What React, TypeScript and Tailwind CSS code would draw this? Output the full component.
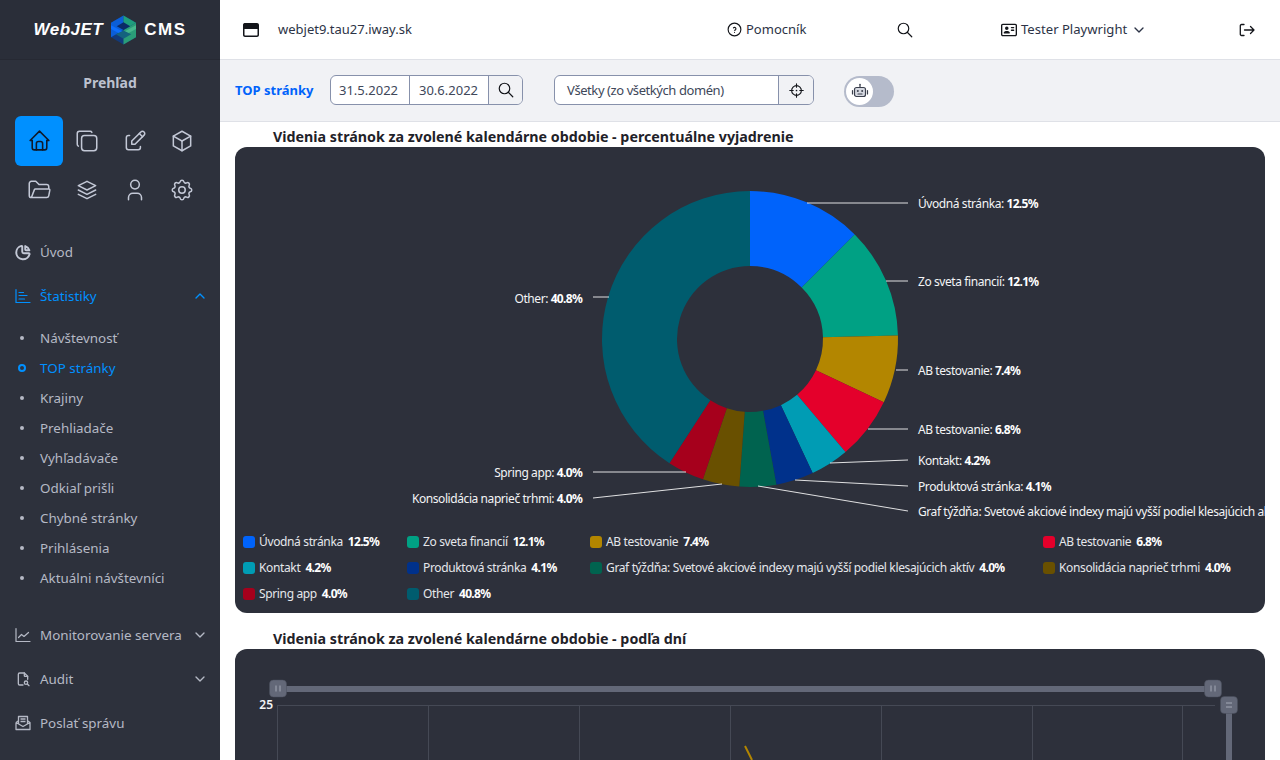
import {
    TbBox,
    TbChartPie,
    TbChevronDown,
    TbChevronUp,
    TbCopy,
    TbEdit,
    TbFileSearch,
    TbFolderOpen,
    TbHelpCircle,
    TbHome,
    TbSearch,
    TbSettings,
    TbStack2,
    TbUser,
} from "react-icons/tb";
import { FaRegAddressCard, FaRegWindowMaximize } from "react-icons/fa6";

const subItems = ["Návštevnosť", "TOP stránky", "Krajiny", "Prehliadače", "Vyhľadávače", "Odkiaľ prišli", "Chybné stránky", "Prihlásenia", "Aktuálni návštevníci"];

const slices = [
    { name: "Úvodná stránka", value: 12.5, color: "#0063fb" },
    { name: "Zo sveta financií", value: 12.1, color: "#00a184" },
    { name: "AB testovanie", value: 7.4, color: "#b38600" },
    { name: "AB testovanie", value: 6.8, color: "#e4002b" },
    { name: "Kontakt", value: 4.2, color: "#009cb4" },
    { name: "Produktová stránka", value: 4.1, color: "#00318b" },
    { name: "Graf týždňa: Svetové akciové indexy majú vyšší podiel klesajúcich aktív", value: 4.0, color: "#00634f" },
    { name: "Konsolidácia naprieč trhmi", value: 4.0, color: "#695000" },
    { name: "Spring app", value: 4.0, color: "#a6001c" },
    { name: "Other", value: 40.8, color: "#005c6e" },
];

const leaders = [
    { i: 0, from: [807, 203], to: [908, 203], x: 918, y: 203 },
    { i: 1, from: [886, 281], to: [908, 281], x: 918, y: 281 },
    { i: 2, from: [896, 370], to: [908, 370], x: 918, y: 370 },
    { i: 3, from: [868, 429], to: [908, 429], x: 918, y: 429 },
    { i: 4, from: [830, 463], to: [908, 460], x: 918, y: 460 },
    { i: 5, from: [795, 480], to: [908, 486], x: 918, y: 486 },
    { i: 6, from: [758, 486], to: [908, 511], x: 918, y: 511 },
    { i: 7, from: [722, 484], to: [593, 498], x: 582, y: 498 },
    { i: 8, from: [686, 472], to: [593, 472], x: 582, y: 472 },
    { i: 9, from: [609, 297], to: [593, 297], x: 582, y: 298 },
];

function slicePath(start: number, end: number) {
    const cx = 750, cy = 339, R = 148, r = 73;
    const p = (a: number, rad: number) => `${cx + rad * Math.sin(a)} ${cy - rad * Math.cos(a)}`;
    const large = end - start > Math.PI ? 1 : 0;
    return `M${p(start, R)} A${R} ${R} 0 ${large} 1 ${p(end, R)} L${p(end, r)} A${r} ${r} 0 ${large} 0 ${p(start, r)} Z`;
}

function PieChart() {
    const total = slices.reduce((s, x) => s + x.value, 0);
    let acc = 0;
    return (
        <svg viewBox="235 147 1030 380" className="block w-[1030px] h-[380px]">
            {slices.map((s, i) => {
                const start = (acc / total) * Math.PI * 2;
                acc += s.value;
                return <path key={i} d={slicePath(start, (acc / total) * Math.PI * 2)} fill={s.color} />;
            })}
            {leaders.map((l) => (
                <g key={l.i}>
                    <line x1={l.from[0]} y1={l.from[1]} x2={l.to[0]} y2={l.to[1]} stroke="#ffffff" strokeOpacity={0.85} strokeWidth={1} />
                    <text x={l.x} y={l.y + 5} fontSize={12} fill="#f3f4f6" letterSpacing={-0.42} textAnchor={l.x < 700 ? "end" : "start"}>
                        {slices[l.i].name}: <tspan fontWeight={700} fill="#ffffff" letterSpacing={-0.7}>{slices[l.i].value.toFixed(1)}%</tspan>
                    </text>
                </g>
            ))}
        </svg>
    );
}

function Handle() {
    return <rect width={17} height={17} x={-8.5} y={-8.5} rx={4} fill="#636878" stroke="#4a4e5c" strokeWidth={0.5} />;
}

function DailyChart() {
    const grid = [277, 428, 579, 730, 881, 1032, 1182];
    return (
        <svg viewBox="235 649 1030 111" className="block w-[1030px] h-[111px]">
            <rect x={285} y={686} width={922} height={6} fill="#636878" />
            <rect x={1226} y={712} width={6} height={48} fill="#636878" />
            <line x1={277} y1={705.5} x2={1215} y2={705.5} stroke="#454955" />
            {grid.map((x) => (
                <line key={x} x1={x + 0.5} y1={705} x2={x + 0.5} y2={760} stroke="#454955" />
            ))}
            <text x={273} y={709} fontSize={12} fontWeight={600} fill="#f3f4f6" textAnchor="end">25</text>
            <line x1={745} y1={746} x2={752} y2={760} stroke="#b38600" strokeWidth={2} />
            <g transform="translate(278 688.5)">
                <Handle />
                <path d="M-2 -3V3M2 -3V3" stroke="#a5a9b6" />
            </g>
            <g transform="translate(1213 688.5)">
                <Handle />
                <path d="M-2 -3V3M2 -3V3" stroke="#a5a9b6" />
            </g>
            <g transform="translate(1229 705)">
                <Handle />
                <path d="M-3 -2H3M-3 2H3" stroke="#a5a9b6" />
            </g>
        </svg>
    );
}

function Logo() {
    return (
        <div className="h-[60px] shrink-0 flex items-center justify-center border-b border-[#262933] bg-[#2a2e39]">
            <span className="text-white text-[17px] font-black italic tracking-[0.5px] leading-none font-['Liberation_Sans',sans-serif]">WebJET</span>
            <svg viewBox="0 0 26 30" className="w-[25px] h-[30px] mx-[8px]">
                <polygon points="13,0 26,7.5 26,22.5 13,30 0,22.5 0,7.5" fill="#123a7a" />
                <polygon points="0,7.5 13,0 13,15 0,22.5" fill="#0b5ed7" />
                <polygon points="13,0 26,7.5 13,15" fill="#1f9d7c" />
                <polygon points="13,15 26,7.5 26,22.5 13,30" fill="#2a9d78" />
                <polygon points="0,10 13,17 13,21 0,14" fill="#0d6efd" />
                <polygon points="13,17 26,10 26,14 13,21" fill="#47b88d" />
                <polygon points="13,7 20,11 13,15 6,11" fill="#0a2a66" />
                <polygon points="13,24 5,19.5 13,15.5 21,19.5" fill="#14627e" />
            </svg>
            <span className="text-white text-[17px] font-black tracking-[1.5px] leading-none font-['Liberation_Sans',sans-serif]">CMS</span>
        </div>
    );
}

function StatsIcon() {
    return (
        <svg viewBox="0 0 16 16" className="w-[16px] h-[16px] shrink-0" fill="none" stroke="currentColor" strokeWidth={1.2} strokeLinecap="round">
            <path d="M1 1.5V14.5H15" />
            <path d="M4 4.5H8.5M4 7.5H12M4 11H9.5" />
        </svg>
    );
}

function MonitorIcon() {
    return (
        <svg viewBox="0 0 16 16" className="w-[16px] h-[16px] shrink-0" fill="none" stroke="currentColor" strokeWidth={1.2} strokeLinecap="round" strokeLinejoin="round">
            <path d="M1 1.5V14.5H15" />
            <path d="M3.5 10.5L6.5 7.5L9 9.5L13.5 5.5" />
        </svg>
    );
}

function MailIcon() {
    return (
        <svg viewBox="0 0 16 16" className="w-[16px] h-[16px] shrink-0" fill="none" stroke="currentColor" strokeWidth={1.3} strokeLinejoin="round">
            <path d="M1 7.5V14.5H15V7.5L12.5 5.8M1 7.5L3.5 5.8M1 7.5L8 11.5L15 7.5" />
            <path d="M3.5 9V1.5H12.5V9" />
            <path d="M5.5 4H10.5M5.5 6.5H10.5" />
        </svg>
    );
}

function LogoutIcon() {
    return (
        <svg viewBox="0 0 16 16" className="w-[16px] h-[16px] text-[#13151a]" fill="none" stroke="currentColor" strokeWidth={1.3} strokeLinecap="round" strokeLinejoin="round">
            <path d="M5 2.5H2.5A1.2 1.2 0 0 0 1.3 3.7V12.3A1.2 1.2 0 0 0 2.5 13.5H5" />
            <path d="M5.5 8H15M11.5 4.5L15 8L11.5 11.5" />
        </svg>
    );
}

function RobotIcon() {
    return (
        <svg viewBox="0 0 18 18" className="w-[18px] h-[18px] text-[#3a3f4c]" fill="none" stroke="currentColor" strokeWidth={1.2} strokeLinecap="round">
            <rect x={3.5} y={5.5} width={11} height={9} rx={2} fill="#d5d8e0" />
            <path d="M9 5.5V3M1.5 8.5V12M16.5 8.5V12M7 12H11" />
            <circle cx={9} cy={2.6} r={0.8} fill="currentColor" stroke="none" />
            <circle cx={6.8} cy={9} r={1} fill="currentColor" stroke="none" />
            <circle cx={11.2} cy={9} r={1} fill="currentColor" stroke="none" />
        </svg>
    );
}

function CrosshairIcon() {
    return (
        <svg viewBox="0 0 16 16" className="w-[15px] h-[15px] text-[#13151a]" fill="none" stroke="currentColor" strokeWidth={1.2} strokeLinecap="round">
            <circle cx={8} cy={8} r={5.2} />
            <path d="M8 0.8V4.5M8 11.5V15.2M0.8 8H4.5M11.5 8H15.2" />
            <circle cx={8} cy={8} r={0.9} fill="currentColor" stroke="none" />
        </svg>
    );
}

function Sidebar() {
    const iconCls = "w-[26px] h-[26px] text-[#c3c8d6]";
    return (
        <aside className="w-[220px] h-full shrink-0 bg-[#2d313c] flex flex-col overflow-hidden text-[13.4px] text-[#b5b9c5] whitespace-nowrap">
            <Logo />
            <div className="h-[43px] mt-[1px] shrink-0 flex items-center justify-center font-bold text-[14px] text-[#bcc1cf]">Prehľad</div>
            <div className="grid grid-cols-[48px_48px_47px_48px] auto-rows-[49px] shrink-0 px-[15px] mt-[12px] items-center justify-items-center">
                <div className="w-[48px] h-[50px] rounded-[6px] bg-[#0090ff] flex items-center justify-center text-[#0f1a2a]"><TbHome size={25} strokeWidth={1.5} /></div>
                <TbCopy className={iconCls} strokeWidth={1.4} />
                <TbEdit className={iconCls} strokeWidth={1.4} />
                <TbBox className={iconCls} strokeWidth={1.4} />
                <TbFolderOpen className={iconCls} strokeWidth={1.4} />
                <TbStack2 className={iconCls} strokeWidth={1.4} />
                <TbUser className={iconCls} strokeWidth={1.4} />
                <TbSettings className={iconCls} strokeWidth={1.4} />
            </div>
            <nav className="mt-[16px] flex flex-col shrink-0">
                <a className="h-[44px] flex items-center pl-[14px] pr-[12px] gap-[8px]">
                    <span className="w-[18px] flex justify-center text-[#c3c8d6]"><TbChartPie size={19} strokeWidth={2.6} /></span>
                    <span>Úvod</span>
                </a>
                <a className="h-[44px] flex items-center pl-[15px] pr-[12px] gap-[9px] text-[#0090ff]">
                    <StatsIcon />
                    <span className="flex-1">Štatistiky</span>
                    <TbChevronUp size={16} strokeWidth={2} />
                </a>
                <ul className="pt-[5px] flex flex-col">
                    {subItems.map((item) => {
                        const active = item === "TOP stránky";
                        return (
                            <li key={item} className={`h-[30px] flex items-center ${active ? "text-[#0090ff]" : ""}`}>
                                <span className="w-[40px] flex justify-center pl-[4px]">
                                    {active ? (
                                        <span className="w-[8px] h-[8px] rounded-full border-2 border-[#0090ff]" />
                                    ) : (
                                        <span className="w-[4px] h-[4px] rounded-full bg-[#b5b9c5]" />
                                    )}
                                </span>
                                {item}
                            </li>
                        );
                    })}
                </ul>
                <a className="h-[44px] mt-[20px] flex items-center pl-[15px] pr-[12px] gap-[9px]">
                    <MonitorIcon />
                    <span className="flex-1">Monitorovanie servera</span>
                    <TbChevronDown size={16} strokeWidth={2} />
                </a>
                <a className="h-[44px] flex items-center pl-[15px] pr-[12px] gap-[9px]">
                    <TbFileSearch size={16} className="shrink-0" />
                    <span className="flex-1">Audit</span>
                    <TbChevronDown size={16} strokeWidth={2} />
                </a>
                <a className="h-[44px] flex items-center pl-[15px] pr-[12px] gap-[9px]">
                    <MailIcon />
                    <span className="flex-1">Poslať správu</span>
                </a>
            </nav>
        </aside>
    );
}

function TopBar() {
    return (
        <header className="h-[60px] shrink-0 bg-white border-b border-[#dfe1e7] flex items-center text-[13px] text-[#2c3346] whitespace-nowrap">
            <span className="w-[58px] pl-[23px]"><FaRegWindowMaximize size={16} className="text-[#13151a]" /></span>
            <span className="w-[448px]">webjet9.tau27.iway.sk</span>
            <TbHelpCircle size={17} className="mr-[3px] text-[#13151a]" strokeWidth={1.6} />
            <span className="w-[150px]">Pomocník</span>
            <TbSearch size={18} className="text-[#13151a] mr-[87px]" strokeWidth={1.6} />
            <FaRegAddressCard size={16} className="mr-[4px] text-[#13151a]" />
            <span className="text-[13.1px]">Tester Playwright</span>
            <TbChevronDown size={16} className="ml-[4px] mr-[92px]" />
            <LogoutIcon />
        </header>
    );
}

function ToolBar() {
    return (
        <div className="h-[62px] shrink-0 bg-[#f1f2f5] border-b border-[#dfe1e7] flex items-center pb-[1px] pl-[15px] text-[13px] text-[#40485a] whitespace-nowrap">
            <span className="w-[95px] pt-[1px] font-bold text-[13px] text-[#0063fb]">TOP stránky</span>
            <div className="w-[193px] h-[30px] flex rounded-[6px] border border-[#8791ab] overflow-hidden bg-white">
                <span className="w-[79px] flex items-center pl-[8px] pt-[1px] border-r border-[#8791ab]">31.5.2022</span>
                <span className="w-[79px] flex items-center pl-[9px] pt-[1px] border-r border-[#8791ab]">30.6.2022</span>
                <span className="flex-1 flex items-center justify-center bg-[#f1f2f5] text-[#13151a]"><TbSearch size={18} strokeWidth={1.6} /></span>
            </div>
            <div className="w-[260px] h-[30px] ml-[31px] flex rounded-[6px] border border-[#8791ab] overflow-hidden bg-white">
                <span className="w-[224px] flex items-center pl-[12px] pt-[1px] border-r border-[#8791ab] tracking-[-0.42px]">Všetky (zo všetkých domén)</span>
                <span className="flex-1 flex items-center justify-center bg-[#f1f2f5]"><CrosshairIcon /></span>
            </div>
            <div className="w-[50px] h-[31px] ml-[30px] mt-[2px] rounded-full flex items-center px-[2px] bg-[#b5bbcb]">
                <span className="w-[27px] h-[27px] rounded-full bg-white flex items-center justify-center"><RobotIcon /></span>
            </div>
        </div>
    );
}

export default function App() {
    return (
        <div className="w-full h-screen flex overflow-hidden bg-white font-['Noto_Sans',sans-serif]">
            <Sidebar />
            <main className="flex-1 min-w-0 flex flex-col">
                <TopBar />
                <ToolBar />
                <div className="flex-1 overflow-hidden pl-[15px] pr-[15px]">
                    <h3 className="h-[25px] pl-[38px] flex items-end font-bold text-[14.25px] leading-[20px] text-[#1f2229]">Videnia stránok za zvolené kalendárne obdobie - percentuálne vyjadrenie</h3>
                    <section className="h-[466px] rounded-[12px] bg-[#2d303b] overflow-hidden">
                        <PieChart />
                        <div className="grid grid-cols-[164px_183px_453px_1fr] auto-rows-[26px] pl-[8px] pt-[2px] text-[12px] text-[#e5e7eb]">
                            {slices.map((s, i) => (
                                <div key={i} className="flex items-center gap-[4px] whitespace-nowrap">
                                    <span className="w-[12px] h-[12px] rounded-[3px] shrink-0" style={{ backgroundColor: s.color }} />
                                    <span className="tracking-[-0.36px]">{s.name}</span>
                                    <b className="ml-[1px] font-bold text-white tracking-[-0.7px]">{s.value.toFixed(1)}%</b>
                                </div>
                            ))}
                        </div>
                    </section>
                    <h3 className="h-[36px] pl-[38px] flex items-end font-bold text-[14.25px] leading-[20px] text-[#1f2229]">Videnia stránok za zvolené kalendárne obdobie - podľa dní</h3>
                    <section className="h-[400px] rounded-[12px] bg-[#2d303b] overflow-hidden">
                        <DailyChart />
                    </section>
                </div>
            </main>
        </div>
    );
}
